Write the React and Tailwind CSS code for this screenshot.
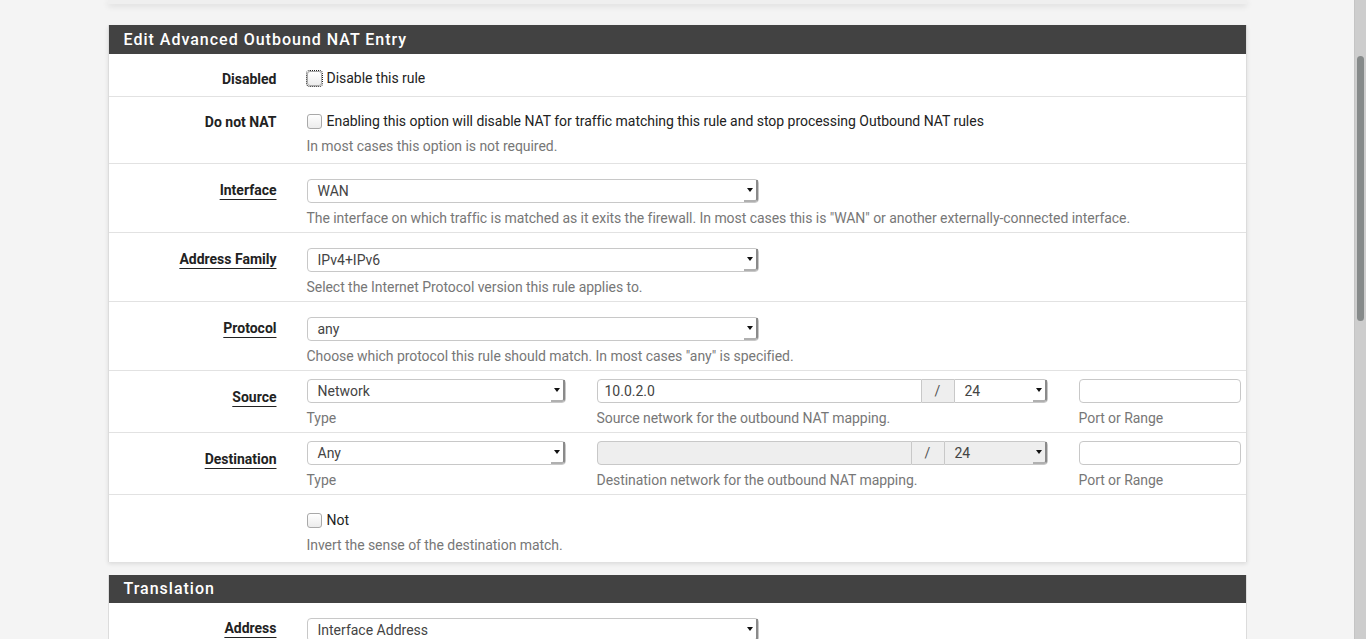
import React from "react";

const font = { fontFamily: "Roboto, 'Liberation Sans', sans-serif" };

function Arrow() {
  return (
    <div className="flex h-full w-[14px] shrink-0 items-center justify-center border-r-2 border-b-2 border-r-[#8a8a8a] border-b-[#b0b0b0] rounded-br-[3px]">
      <svg width="6" height="4" viewBox="0 0 6 4">
        <path d="M0 0 L6 0 L3 4 Z" fill="#111" />
      </svg>
    </div>
  );
}

function Select({ value, className = "", bg = "bg-white", rounded = "rounded-[4px]" }) {
  return (
    <div className={`flex h-[24px] items-center border border-[#c8c8c8] ${bg} ${rounded} ${className}`}>
      <span className="flex-1 pl-[10px] text-[14px] leading-[22px] text-[#444]">{value}</span>
      <Arrow />
    </div>
  );
}

function Checkbox({ focused }) {
  return (
    <span
      className={`inline-block h-[15px] w-[15px] shrink-0 rounded-[3px] border border-[#a9a9a9] bg-gradient-to-b from-white to-[#ececec] ${
        focused ? "outline-1 outline-dotted outline-[#222]" : ""
      }`}
    />
  );
}

function Label({ text, link, pt = "pt-[14px]" }) {
  return (
    <div className={`w-[183px] shrink-0 pr-[15px] text-right ${pt}`}>
      <span
        className={`text-[14px] leading-[22px] font-bold text-[#222] ${
          link ? "underline decoration-1 underline-offset-[4px]" : ""
        }`}
      >
        {text}
      </span>
    </div>
  );
}

function Help({ children, mt = "mt-[4px]" }) {
  return (
    <div className={`${mt} h-[20px] text-[14px] leading-[20px] tracking-[-0.05px] text-[#777]`}>
      {children}
    </div>
  );
}

function CheckRow({ label, text, help, first, pt = "pt-[13px]" }) {
  return (
    <div className={`flex ${first ? "" : "border-t border-[#e2e2e2]"}`}>
      <Label text={label} pt="pt-[13px]" />
      <div className={`flex-1 pl-[15px] ${pt} pb-[7px]`}>
        <div className="flex h-[22px] items-center gap-[5px]">
          <Checkbox focused={first} />
          <span className="text-[14px] leading-[22px] tracking-[-0.03px] text-[#222]">{text}</span>
        </div>
        {help && <Help>{help}</Help>}
      </div>
    </div>
  );
}

function SelectRow({ label, value, help }) {
  return (
    <div className="flex border-t border-[#e2e2e2]">
      <Label text={label} link pt="pt-[14px]" />
      <div className="flex-1 pl-[15px] pt-[15px] pb-[4px]">
        <Select value={value} className="w-[452px]" />
        <Help mt="mt-[5px]">{help}</Help>
      </div>
    </div>
  );
}

function NetRow({ label, type, address, helpAddr, disabled }) {
  return (
    <div className="flex border-t border-[#e2e2e2]">
      <Label text={label} link pt="pt-[14px]" />
      <div className="flex flex-1 gap-[31px] pl-[15px] pt-[8px] pb-[4px]">
        <div className="w-[259px]">
          <Select value={type} />
          <Help mt="mt-[5px]">Type</Help>
        </div>
        <div className="w-[451px]">
          <div className="flex h-[24px]">
            <div
              className={`flex flex-1 items-center rounded-l-[4px] border border-[#c8c8c8] pl-[7px] text-[14px] text-[#444] ${
                disabled ? "bg-[#eeeeee]" : "bg-white"
              }`}
            >
              {address}
            </div>
            <div className="flex w-[32px] items-center justify-center border-y border-[#c8c8c8] bg-[#eeeeee] text-[14px] text-[#555]">
              /
            </div>
            <Select
              value="24"
              className={disabled ? "w-[104px]" : "w-[94px]"}
              bg={disabled ? "bg-[#eeeeee]" : "bg-white"}
              rounded="rounded-r-[4px]"
            />
          </div>
          <Help mt="mt-[5px]">{helpAddr}</Help>
        </div>
        <div className="w-[162px]">
          <div className="h-[24px] rounded-[4px] border border-[#c8c8c8] bg-white" />
          <Help mt="mt-[5px]">Port or Range</Help>
        </div>
      </div>
    </div>
  );
}

function PanelHeader({ title, h = "h-[29px]" }) {
  return (
    <div className={`flex ${h} items-center bg-[#424242] pl-[15px] text-[16px] font-medium tracking-[1px] text-white`}>
      {title}
    </div>
  );
}

export default function App() {
  return (
    <div className="flex h-[639px] w-full overflow-hidden bg-[#f4f4f4]" style={font}>
      <div className="flex-1 overflow-hidden">
        <div className="mx-auto w-[1139px]">
          <div className="h-[4px] bg-[#efefef] shadow-[0_2px_6px_rgba(0,0,0,0.12)]" />
          <div className="mt-[21px] border-r border-l border-[#dcdcdc] bg-white shadow-[0_2px_4px_rgba(0,0,0,0.1)]">
            <PanelHeader title="Edit Advanced Outbound NAT Entry" />
            <CheckRow first label="Disabled" text="Disable this rule" />
            <CheckRow
              label="Do not NAT"
              text="Enabling this option will disable NAT for traffic matching this rule and stop processing Outbound NAT rules"
              help="In most cases this option is not required."
            />
            <SelectRow
              label="Interface"
              value="WAN"
              help={`The interface on which traffic is matched as it exits the firewall. In most cases this is "WAN" or another externally-connected interface.`}
            />
            <SelectRow
              label="Address Family"
              value="IPv4+IPv6"
              help="Select the Internet Protocol version this rule applies to."
            />
            <SelectRow
              label="Protocol"
              value="any"
              help={`Choose which protocol this rule should match. In most cases "any" is specified.`}
            />
            <NetRow
              label="Source"
              type="Network"
              address="10.0.2.0"
              helpAddr="Source network for the outbound NAT mapping."
            />
            <NetRow
              label="Destination"
              type="Any"
              address=""
              disabled
              helpAddr="Destination network for the outbound NAT mapping."
            />
            <CheckRow label="" text="Not" help="Invert the sense of the destination match." pt="pt-[14px]" />
          </div>
          <div className="mt-[13px] border-r border-l border-[#dcdcdc] bg-white">
            <PanelHeader title="Translation" h="h-[28px]" />
            <div className="flex">
              <Label text="Address" link pt="pt-[13px]" />
              <div className="flex-1 pl-[15px] pt-[15px]">
                <Select value="Interface Address" className="w-[452px]" />
              </div>
            </div>
          </div>
        </div>
      </div>
      <div className="flex w-[12px] shrink-0 justify-center border-l border-[#c4c4c4] bg-[#cdcdcd] pt-[56px]">
        <div className="h-[265px] w-[7px] rounded-full bg-[#868a8a]" />
      </div>
    </div>
  );
}
